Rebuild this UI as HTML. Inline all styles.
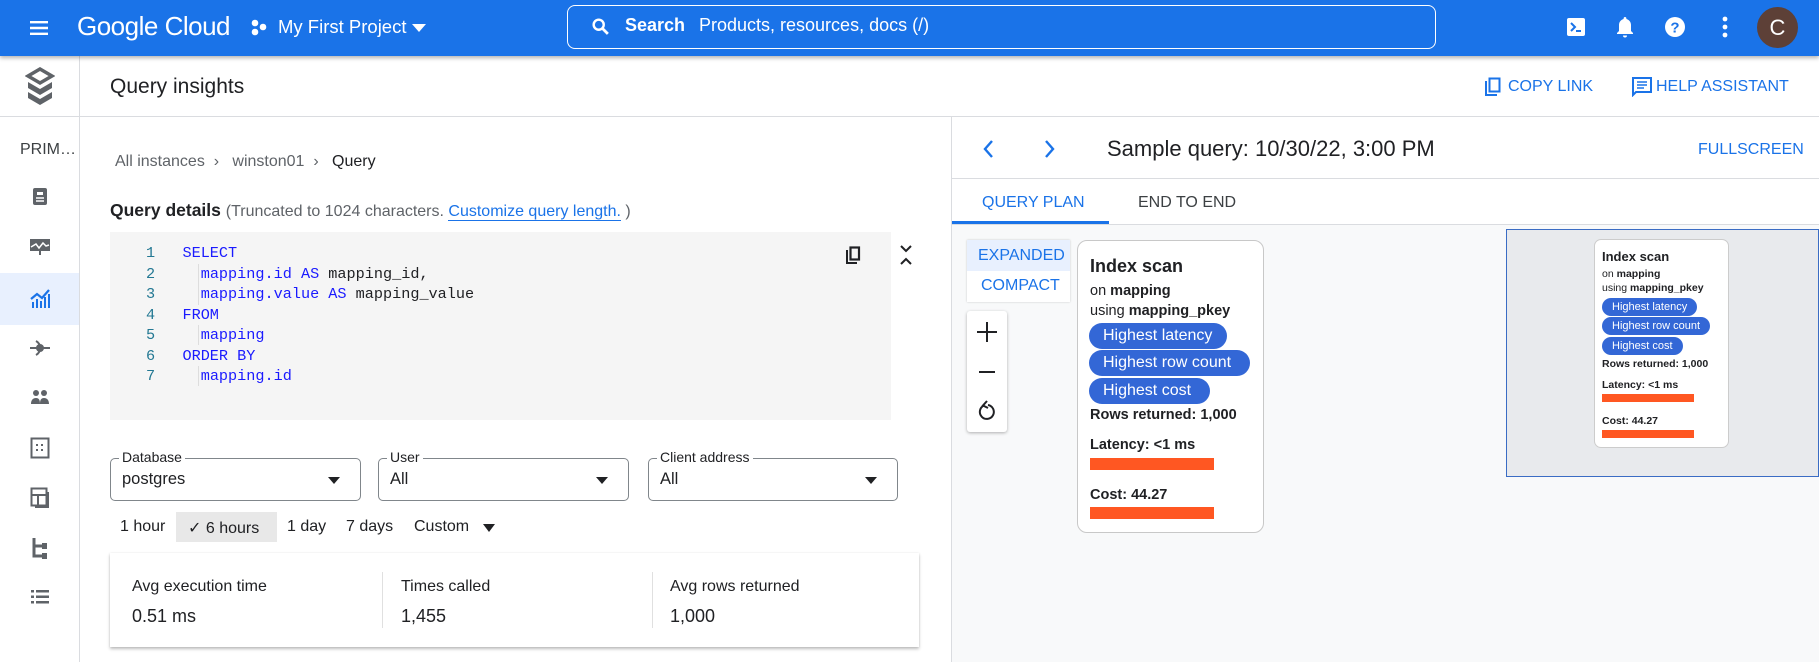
<!DOCTYPE html>
<html><head><meta charset="utf-8"><style>
*{margin:0;padding:0;box-sizing:border-box}
body{width:1819px;height:662px;overflow:hidden;font-family:"Liberation Sans",sans-serif;color:#202124;background:#fff;position:relative}
.a{position:absolute}
.hdr{left:0;top:0;width:1819px;height:56px;background:#1a73e8;box-shadow:0 2px 4px rgba(0,0,0,.3);z-index:5}
.w{color:#fff}
.mono{font-family:"Liberation Mono",monospace;font-size:15.2px}
.kw{color:#1a1aff}
.ln{color:#237893}
.blue{color:#1a73e8}
.sb{fill:#5f6368}
.dd{border:1px solid #80868b;border-radius:5px;height:43px}
.dd .l{position:absolute;top:-10px;left:8px;background:#fff;padding:0 3px;font-size:14px;color:#202124}
.dd .v{position:absolute;left:11px;top:11px;font-size:16.5px}
.dd .t{position:absolute;right:20px;top:18px;width:0;height:0;border-left:6px solid transparent;border-right:6px solid transparent;border-top:7px solid #202124}
.pill{position:absolute;background:#3367d6;color:#fff;border-radius:14px;font-size:16px;line-height:26px;padding:0 14px}
.mpill{position:absolute;background:#3367d6;color:#fff;border-radius:9px;font-size:11px;line-height:18px;padding:0 10px}
.bar{position:absolute;background:#ff5722}
</style></head><body>
<div class="a hdr">
 <svg class="a" style="left:27px;top:16px" width="24" height="24" viewBox="0 0 24 24"><path d="M3 5h18v2.4H3zM3 10.8h18v2.4H3zM3 16.6h18V19H3z" fill="#fff"/></svg>
 <div class="a w" style="left:77px;top:11px;font-size:26px;letter-spacing:-0.5px">Google Cloud</div>
 <svg class="a" style="left:250px;top:17px" width="20" height="22" viewBox="0 0 20 22"><circle cx="5" cy="6" r="3.3" fill="#fff"/><circle cx="13" cy="10" r="3.3" fill="#fff"/><circle cx="5" cy="15" r="3.3" fill="#fff"/></svg>
 <div class="a w" style="left:278px;top:16px;font-size:18.5px">My First Project</div>
 <div class="a" style="left:412px;top:24px;border-left:7px solid transparent;border-right:7px solid transparent;border-top:8px solid #fff"></div>
 <div class="a" style="left:567px;top:5px;width:869px;height:44px;border:1.5px solid #fff;border-radius:8px"></div>
 <svg class="a" style="left:590px;top:16px" width="22" height="22" viewBox="0 0 24 24"><circle cx="9.5" cy="9.5" r="5.5" stroke="#fff" stroke-width="2.6" fill="none"/><path d="M13.5 13.5l6 6" stroke="#fff" stroke-width="3"/></svg>
 <div class="a w" style="left:625px;top:15px;font-size:18px;font-weight:bold">Search</div>
 <div class="a w" style="left:699px;top:15px;font-size:18px">Products, resources, docs (/)</div>
 <svg class="a" style="left:1566px;top:17px" width="20" height="20" viewBox="0 0 20 20"><rect x="1" y="1" width="18" height="18" rx="2" fill="#fff"/><path d="M5 6l4 4-4 4" stroke="#1a73e8" stroke-width="2" fill="none"/><path d="M10 14h5" stroke="#1a73e8" stroke-width="2"/></svg>
 <svg class="a" style="left:1614px;top:15px" width="22" height="24" viewBox="0 0 22 24"><path d="M11 2c-.8 0-1.4.6-1.4 1.4v.6C6.8 4.7 5 7.2 5 10v6l-2 2v1h16v-1l-2-2v-6c0-2.8-1.8-5.3-4.6-6v-.6C12.4 2.6 11.8 2 11 2zM9 20.5a2 2 0 004 0z" fill="#fff"/></svg>
 <svg class="a" style="left:1664px;top:16px" width="22" height="22" viewBox="0 0 22 22"><circle cx="11" cy="11" r="10" fill="#fff"/><text x="11" y="16.5" font-size="15" font-weight="bold" text-anchor="middle" fill="#1a73e8" font-family="Liberation Sans">?</text></svg>
 <svg class="a" style="left:1720px;top:15px" width="10" height="24" viewBox="0 0 10 24"><circle cx="5" cy="4" r="2.4" fill="#fff"/><circle cx="5" cy="12" r="2.4" fill="#fff"/><circle cx="5" cy="20" r="2.4" fill="#fff"/></svg>
 <div class="a" style="left:1757px;top:7px;width:41px;height:41px;border-radius:50%;background:#5d4037;color:#fff;font-size:22px;text-align:center;line-height:41px">C</div>
</div>

<div class="a" style="left:79px;top:56px;width:1px;height:606px;background:#dadce0"></div>
<svg class="a" style="left:25px;top:67px" width="30" height="40" viewBox="0 0 30 40"><path d="M15 2L27 9 15 16 3 9z" fill="none" stroke="#5f6368" stroke-width="3.5"/><path d="M3 15l12 7 12-7v6l-12 7-12-7zM3 25l12 7 12-7v6l-12 7-12-7z" fill="#5f6368"/></svg>
<div class="a" style="left:0;top:116px;width:1819px;height:1px;background:#dadce0"></div>
<div class="a" style="left:20px;top:141px;font-size:16px;color:#3c4043">PRIM…</div>
<svg class="a" style="left:32px;top:187px" width="16" height="20" viewBox="0 0 16 20"><rect x="1" y="1" width="14" height="17" rx="2" class="sb"/><rect x="5" y="5" width="6" height="3" fill="#fff"/><path d="M4 11h8M4 14h8" stroke="#fff" stroke-width="1.4"/></svg>
<svg class="a" style="left:29px;top:238px" width="22" height="18" viewBox="0 0 22 18"><rect x="1" y="1" width="20" height="12" class="sb"/><path d="M2 9l5-3 3 4 4-5 3 3 3-1" stroke="#fff" stroke-width="1.5" fill="none"/><rect x="10" y="13" width="2" height="4" class="sb"/></svg>
<div class="a" style="left:0;top:273px;width:79px;height:52px;background:#e8f0fe"></div>
<svg class="a" style="left:29px;top:288px" width="22" height="20" viewBox="0 0 22 20"><path d="M2 11l6-5 5 4 7-8" stroke="#1a73e8" stroke-width="2.2" fill="none"/><path d="M3 14h2v6H3zM7 11h2v9H7zM11 13h2v7h-2zM15 9h2v11h-2zM19 6h2v14h-2z" fill="#1a73e8"/></svg>
<svg class="a" style="left:29px;top:338px" width="22" height="20" viewBox="0 0 22 20"><circle cx="11" cy="10" r="4" class="sb"/><path d="M1 10h20M7 3a8 8 0 010 14" stroke="#5f6368" stroke-width="2" fill="none"/></svg>
<svg class="a" style="left:30px;top:389px" width="20" height="18" viewBox="0 0 20 18"><circle cx="6" cy="4" r="3" class="sb"/><circle cx="14" cy="4" r="3" class="sb"/><path d="M1 15c0-4 2-6 5-6s4 2 4 6zM10 15c0-4 1-6 4-6s5 2 5 6z" class="sb"/></svg>
<svg class="a" style="left:30px;top:437px" width="20" height="22" viewBox="0 0 20 22"><rect x="1.5" y="1.5" width="17" height="19" fill="none" stroke="#5f6368" stroke-width="2"/><path d="M6 7h2v2H6zM11 7h2v2h-2zM6 12h2v2H6zM11 12h2v2h-2z" class="sb"/></svg>
<svg class="a" style="left:30px;top:487px" width="20" height="22" viewBox="0 0 20 22"><rect x="1.5" y="1.5" width="15" height="17" fill="none" stroke="#5f6368" stroke-width="2"/><path d="M2 8h14M8 8v10M18 5v15H5" stroke="#5f6368" stroke-width="2" fill="none"/></svg>
<svg class="a" style="left:31px;top:537px" width="18" height="22" viewBox="0 0 18 22"><path d="M3 1v18h12M3 9h8" stroke="#5f6368" stroke-width="3" fill="none"/><rect x="11" y="6" width="5" height="6" class="sb"/><rect x="11" y="16" width="5" height="6" class="sb"/></svg>
<svg class="a" style="left:30px;top:587px" width="20" height="20" viewBox="0 0 20 20"><path d="M1 3h3v2.5H1zM1 8.5h3V11H1zM1 14h3v2.5H1zM6 3h13v2.5H6zM6 8.5h13V11H6zM6 14h13v2.5H6z" class="sb"/></svg>

<div class="a" style="left:110px;top:75px;font-size:21px">Query insights</div>
<svg class="a" style="left:1484px;top:77px" width="17" height="20" viewBox="0 0 17 20"><path d="M2 4v14h11" stroke="#1a73e8" stroke-width="2" fill="none"/><rect x="5.5" y="1.5" width="10" height="13" fill="none" stroke="#1a73e8" stroke-width="2"/></svg>
<div class="a blue" style="left:1508px;top:78px;font-size:16px">COPY LINK</div>
<svg class="a" style="left:1632px;top:77px" width="20" height="20" viewBox="0 0 20 20"><path d="M1 1h18v14H4l-3 3z" fill="none" stroke="#1a73e8" stroke-width="2"/><path d="M5 5h10M5 8h10M5 11h7" stroke="#1a73e8" stroke-width="1.6"/></svg>
<div class="a blue" style="left:1656px;top:78px;font-size:16px">HELP ASSISTANT</div>

<div class="a" style="left:951px;top:116px;width:1px;height:546px;background:#dadce0"></div>
<div class="a" style="left:115px;top:153px;font-size:16px;color:#5f6368">All instances &nbsp;<span style="color:#5f6368">›</span>&nbsp;&nbsp; winston01 &nbsp;<span>›</span>&nbsp;&nbsp; <span style="color:#202124">Query</span></div>
<div class="a" style="left:110px;top:200px;font-size:17.5px"><b style="font-weight:bold">Query details</b> <span style="font-size:16px;color:#5f6368">(Truncated to 1024 characters. <span class="blue" style="border-bottom:1px solid #1a73e8">Customize query length.</span> )</span></div>
<div class="a" style="left:110px;top:232px;width:781px;height:188px;background:#f5f5f5"></div>
<div class="a" style="left:198px;top:264px;width:1px;height:41px;background:#ddd"></div>
<div class="a" style="left:198px;top:325px;width:1px;height:20px;background:#ddd"></div>
<div class="a" style="left:198px;top:366px;width:1px;height:20px;background:#ddd"></div>
<div class="a mono" style="left:146px;top:243px;line-height:20.5px">
<div><span class="ln">1</span>&nbsp;&nbsp;&nbsp;<span class="kw">SELECT</span></div>
<div><span class="ln">2</span>&nbsp;&nbsp;&nbsp;&nbsp;&nbsp;<span class="kw">mapping.id AS</span> mapping_id,</div>
<div><span class="ln">3</span>&nbsp;&nbsp;&nbsp;&nbsp;&nbsp;<span class="kw">mapping.value AS</span> mapping_value</div>
<div><span class="ln">4</span>&nbsp;&nbsp;&nbsp;<span class="kw">FROM</span></div>
<div><span class="ln">5</span>&nbsp;&nbsp;&nbsp;&nbsp;&nbsp;<span class="kw">mapping</span></div>
<div><span class="ln">6</span>&nbsp;&nbsp;&nbsp;<span class="kw">ORDER BY</span></div>
<div><span class="ln">7</span>&nbsp;&nbsp;&nbsp;&nbsp;&nbsp;<span class="kw">mapping.id</span></div>
</div>
<svg class="a" style="left:845px;top:246px" width="16" height="19" viewBox="0 0 16 19"><path d="M2 4v13h10" stroke="#202124" stroke-width="2" fill="none"/><rect x="5.5" y="1.5" width="8.5" height="12" fill="none" stroke="#202124" stroke-width="2.2"/></svg>
<svg class="a" style="left:899px;top:244px" width="14" height="22" viewBox="0 0 14 22"><path d="M2 2l5 5 5-5M2 20l5-5 5 5" stroke="#202124" stroke-width="2" fill="none"/></svg>

<div class="a dd" style="left:110px;top:458px;width:251px"><span class="l">Database</span><span class="v">postgres</span><span class="t"></span></div>
<div class="a dd" style="left:378px;top:458px;width:251px"><span class="l">User</span><span class="v">All</span><span class="t"></span></div>
<div class="a dd" style="left:648px;top:458px;width:250px"><span class="l">Client address</span><span class="v">All</span><span class="t"></span></div>

<div class="a" style="left:176px;top:512px;width:101px;height:30px;background:#e8e8e8"></div>
<div class="a" style="left:120px;top:518px;font-size:16px">1 hour</div>
<div class="a" style="left:188px;top:518px;font-size:16px">✓ 6 hours</div>
<div class="a" style="left:287px;top:518px;font-size:16px">1 day</div>
<div class="a" style="left:346px;top:518px;font-size:16px">7 days</div>
<div class="a" style="left:414px;top:518px;font-size:16px">Custom</div>
<div class="a" style="left:483px;top:524px;border-left:6px solid transparent;border-right:6px solid transparent;border-top:8px solid #202124"></div>

<div class="a" style="left:110px;top:553px;width:809px;height:94px;background:#fff;box-shadow:0 2px 3px rgba(0,0,0,.25),0 0 2px rgba(0,0,0,.08)"></div>
<div class="a" style="left:382px;top:572px;width:1px;height:56px;background:#e0e0e0"></div>
<div class="a" style="left:652px;top:572px;width:1px;height:56px;background:#e0e0e0"></div>
<div class="a" style="left:132px;top:578px;font-size:16px">Avg execution time</div>
<div class="a" style="left:132px;top:606px;font-size:18px">0.51 ms</div>
<div class="a" style="left:401px;top:578px;font-size:16px">Times called</div>
<div class="a" style="left:401px;top:606px;font-size:18px">1,455</div>
<div class="a" style="left:670px;top:578px;font-size:16px">Avg rows returned</div>
<div class="a" style="left:670px;top:606px;font-size:18px">1,000</div>

<svg class="a" style="left:981px;top:138px" width="14" height="22" viewBox="0 0 14 22"><path d="M11 3L4 11l7 8" stroke="#1a73e8" stroke-width="2.4" fill="none"/></svg>
<svg class="a" style="left:1043px;top:138px" width="14" height="22" viewBox="0 0 14 22"><path d="M3 3l7 8-7 8" stroke="#1a73e8" stroke-width="2.4" fill="none"/></svg>
<div class="a" style="left:1107px;top:136px;font-size:22px">Sample query: 10/30/22, 3:00 PM</div>
<div class="a blue" style="left:1698px;top:141px;font-size:16px">FULLSCREEN</div>
<div class="a" style="left:952px;top:178px;width:867px;height:1px;background:#dadce0"></div>
<div class="a blue" style="left:982px;top:194px;font-size:16px">QUERY PLAN</div>
<div class="a" style="left:1138px;top:194px;font-size:16px;color:#3c4043">END TO END</div>
<div class="a" style="left:952px;top:221px;width:157px;height:3px;background:#1a73e8"></div>
<div class="a" style="left:952px;top:224px;width:867px;height:438px;background:#f8f9fa;border-top:1px solid #dadce0"></div>

<div class="a" style="left:967px;top:240px;width:103px;height:62px;background:#fff;box-shadow:0 0 2px rgba(0,0,0,.2)"></div>
<div class="a" style="left:967px;top:240px;width:103px;height:31px;background:#e8f0fe"></div>
<div class="a blue" style="left:978px;top:247px;font-size:16px">EXPANDED</div>
<div class="a blue" style="left:981px;top:277px;font-size:16px">COMPACT</div>
<div class="a" style="left:967px;top:311px;width:40px;height:121px;background:#fff;box-shadow:0 1px 3px rgba(0,0,0,.3);border-radius:3px"></div>
<div class="a" style="left:977px;top:331px;width:20px;height:2px;background:#202124"></div>
<div class="a" style="left:986px;top:322px;width:2px;height:20px;background:#202124"></div>
<div class="a" style="left:979px;top:371px;width:16px;height:2px;background:#202124"></div>
<svg class="a" style="left:977px;top:400px" width="20" height="22" viewBox="0 0 20 22"><path d="M7 5.5A7 7 0 1 0 11 5" stroke="#202124" stroke-width="2" fill="none"/><path d="M10 1l-4 4.5 5 2.5" stroke="#202124" stroke-width="2" fill="none"/></svg>

<div class="a" style="left:1077px;top:240px;width:187px;height:293px;background:#fff;border:1.5px solid #c8c8c8;border-radius:10px"></div>
<div class="a" style="left:1090px;top:256px;font-size:18px;font-weight:bold">Index scan</div>
<div class="a" style="left:1090px;top:283px;font-size:14.5px">on <b>mapping</b></div>
<div class="a" style="left:1090px;top:303px;font-size:14.5px">using <b>mapping_pkey</b></div>
<div class="pill" style="left:1089px;top:323px;width:138px">Highest latency</div>
<div class="pill" style="left:1089px;top:350px;width:161px">Highest row count</div>
<div class="pill" style="left:1089px;top:378px;width:121px">Highest cost</div>
<div class="a" style="left:1090px;top:407px;font-size:14.5px;font-weight:bold">Rows returned: 1,000</div>
<div class="a" style="left:1090px;top:437px;font-size:14.5px;font-weight:bold">Latency: &lt;1 ms</div>
<div class="bar" style="left:1090px;top:458px;width:124px;height:12px"></div>
<div class="a" style="left:1090px;top:487px;font-size:14.5px;font-weight:bold">Cost: 44.27</div>
<div class="bar" style="left:1090px;top:507px;width:124px;height:12px"></div>

<div class="a" style="left:1506px;top:229px;width:313px;height:248px;background:#e8eaed;border:1.5px solid #3a6cc4"></div>
<div class="a" style="left:1594px;top:239px;width:135px;height:209px;background:#fff;border:1px solid #ccc;border-radius:7px"></div>
<div class="a" style="left:1602px;top:249px;font-size:13px;font-weight:bold">Index scan</div>
<div class="a" style="left:1602px;top:268px;font-size:10.5px">on <b>mapping</b></div>
<div class="a" style="left:1602px;top:282px;font-size:10.5px">using <b>mapping_pkey</b></div>
<div class="mpill" style="left:1602px;top:298px">Highest latency</div>
<div class="mpill" style="left:1602px;top:317px">Highest row count</div>
<div class="mpill" style="left:1602px;top:337px">Highest cost</div>
<div class="a" style="left:1602px;top:358px;font-size:10.5px;font-weight:bold">Rows returned: 1,000</div>
<div class="a" style="left:1602px;top:379px;font-size:10.5px;font-weight:bold">Latency: &lt;1 ms</div>
<div class="bar" style="left:1602px;top:394px;width:92px;height:8px"></div>
<div class="a" style="left:1602px;top:415px;font-size:10.5px;font-weight:bold">Cost: 44.27</div>
<div class="bar" style="left:1602px;top:430px;width:92px;height:8px"></div>
</body></html>
